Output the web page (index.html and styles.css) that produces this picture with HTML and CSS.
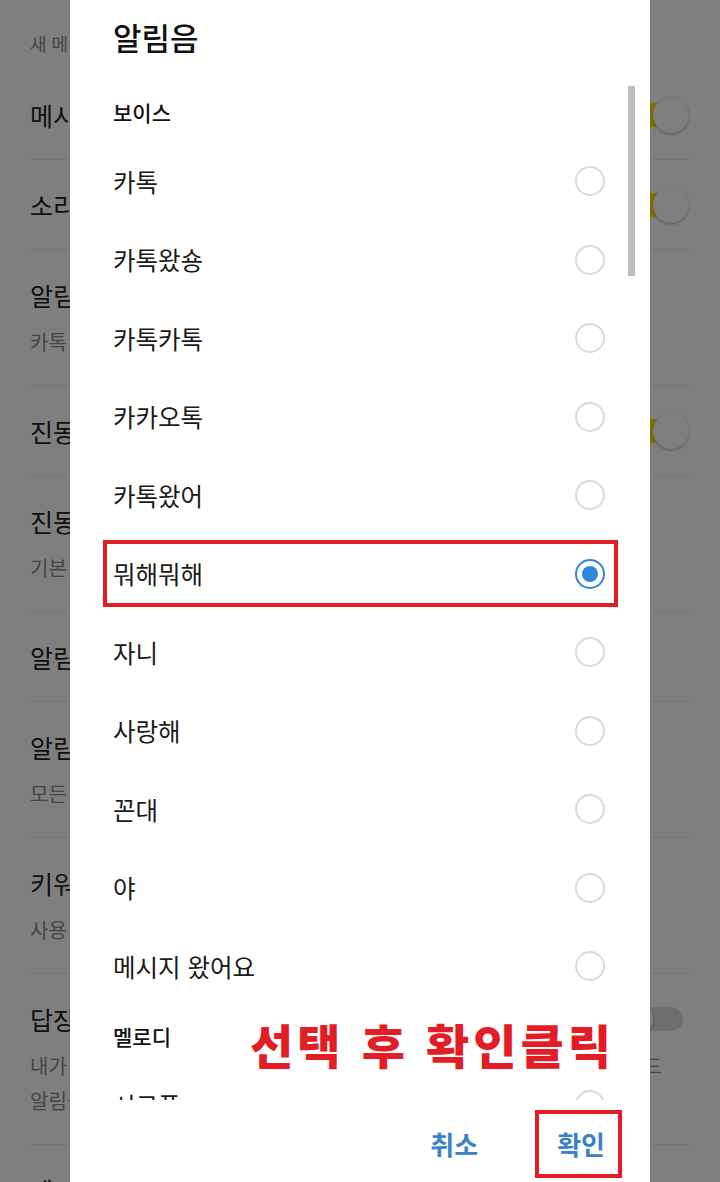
FILE: index.html
```html
<!DOCTYPE html>
<html lang="ko">
<head>
    <meta charset="UTF-8">
    <meta name="viewport" content="width=device-width, initial-scale=1.0">
    <title>알림음</title>
    <link rel="stylesheet" href="styles.css">
</head>
<body>
    <div class="settings">
        <div class="section-title">새 메시지 알림</div>

        <div class="row">
            <div class="row-text"><div class="row-title">메시지 알림</div></div>
            <div class="toggle on"></div>
        </div>
        <div class="row">
            <div class="row-text"><div class="row-title">소리</div></div>
            <div class="toggle on"></div>
        </div>
        <div class="row has-sub">
            <div class="row-text">
                <div class="row-title">알림음</div>
                <div class="row-sub">카톡</div>
            </div>
        </div>
        <div class="row">
            <div class="row-text"><div class="row-title">진동</div></div>
            <div class="toggle on"></div>
        </div>
        <div class="row has-sub">
            <div class="row-text">
                <div class="row-title">진동 패턴</div>
                <div class="row-sub">기본 진동</div>
            </div>
        </div>
        <div class="row">
            <div class="row-text"><div class="row-title">알림창 설정</div></div>
        </div>
        <div class="row has-sub">
            <div class="row-text">
                <div class="row-title">알림 메시지 표시</div>
                <div class="row-sub">모든 내용 표시</div>
            </div>
        </div>
        <div class="row has-sub">
            <div class="row-text">
                <div class="row-title">키워드 알림</div>
                <div class="row-sub">사용 안 함</div>
            </div>
        </div>
        <div class="row has-sub">
            <div class="row-text">
                <div class="row-title">답장 알림</div>
                <div class="row-sub">내가 보낸 메시지에 답장이 오면 채팅방 알림이 꺼져 있어도 알림을 받는 모드<br>알림을 받을 수 있습니다</div>
            </div>
            <div class="toggle"></div>
        </div>
        <div class="row">
            <div class="row-text"><div class="row-title">메시지 미리보기</div></div>
        </div>
    </div>

    <div class="dim"></div>

    <div class="dialog">
        <div class="dialog-title">알림음</div>

        <div class="sound-list">
            <div class="list-header">보이스</div>
            <div class="sound-item"><span>카톡</span><span class="radio"></span></div>
            <div class="sound-item"><span>카톡왔숑</span><span class="radio"></span></div>
            <div class="sound-item"><span>카톡카톡</span><span class="radio"></span></div>
            <div class="sound-item"><span>카카오톡</span><span class="radio"></span></div>
            <div class="sound-item"><span>카톡왔어</span><span class="radio"></span></div>
            <div class="sound-item"><span>뭐해뭐해</span><span class="radio checked"></span></div>
            <div class="sound-item"><span>자니</span><span class="radio"></span></div>
            <div class="sound-item"><span>사랑해</span><span class="radio"></span></div>
            <div class="sound-item"><span>꼰대</span><span class="radio"></span></div>
            <div class="sound-item"><span>야</span><span class="radio"></span></div>
            <div class="sound-item"><span>메시지 왔어요</span><span class="radio"></span></div>
            <div class="list-header">멜로디</div>
            <div class="sound-item"><span>시크푸</span><span class="radio"></span></div>
            <div class="sound-item"><span>카톡 멜로디</span><span class="radio"></span></div>

            <div class="scrollbar"></div>
        </div>

        <div class="dialog-actions">
            <button class="action-btn">취소</button>
            <button class="action-btn">확인</button>
        </div>
    </div>

    <!-- 안내용 빨간 표시 -->
    <div class="mark mark-item"></div>
    <div class="mark mark-ok"></div>
    <div class="mark-note">선택 후 확인클릭</div>
</body>
</html>
```

FILE: styles.css
```css
body {
    margin: 0;
    height: 1182px;
    overflow: hidden;
    background-color: #fff;
    font-family: "Noto Sans CJK KR", "Noto Sans", sans-serif;
}

/* 뒤에 깔린 설정 화면 */
.settings {
    color: #222;
}

.section-title {
    height: 70px;
    box-sizing: border-box;
    padding: 30px 0 0 30px;
    font-size: 18px;
    line-height: 26px;
    color: #888;
}

.row {
    display: flex;
    align-items: center;
    margin: 0 30px;
    padding: 28px 7px 27px 0;
    border-bottom: 1px solid #ececec;
}

.row.has-sub {
    align-items: flex-start;
    padding-bottom: 26px;
}

.row-text {
    flex: 1;
    min-width: 0;
}

.row-title {
    font-size: 25px;
    line-height: 34px;
    color: #222;
    white-space: nowrap;
}

.row-sub {
    margin-top: 12px;
    font-size: 20px;
    line-height: 35px;
    color: #8a8a8a;
    white-space: nowrap;
}

.toggle {
    position: relative;
    flex: none;
    width: 60px;
    height: 36px;
    margin: -1px 0;
}

.toggle::before {
    content: "";
    position: absolute;
    left: 0;
    right: 0;
    top: 6px;
    height: 24px;
    border-radius: 12px;
    background-color: #dcdcdc;
}

.toggle::after {
    content: "";
    position: absolute;
    top: 0;
    left: -6px;
    width: 36px;
    height: 36px;
    border-radius: 50%;
    background-color: #fff;
    box-shadow: 0 1px 3px rgba(0, 0, 0, 0.3);
}

.toggle.on::before {
    background-color: #ffe100;
}

.toggle.on::after {
    left: auto;
    right: -6px;
}

.dim {
    position: fixed;
    top: 0;
    left: 0;
    right: 0;
    bottom: 0;
    background-color: rgba(0, 0, 0, 0.5);
}

/* 알림음 선택 다이얼로그 */
.dialog {
    position: fixed;
    top: 0;
    left: 70px;
    width: 580px;
    height: 1182px;
    display: flex;
    flex-direction: column;
    background-color: #fff;
}

.dialog-title {
    flex: none;
    height: 82px;
    box-sizing: border-box;
    padding: 15px 0 0 43px;
    font-size: 31px;
    line-height: 44px;
    font-weight: 500;
    color: #111;
}

.sound-list {
    position: relative;
    flex: none;
    height: 1018px;
    overflow: hidden;
}

.list-header {
    display: flex;
    align-items: center;
    height: 60px;
    padding-left: 43px;
    font-size: 21px;
    font-weight: 500;
    color: #111;
}

.sound-item {
    display: flex;
    align-items: center;
    justify-content: space-between;
    height: 78.5px;
    padding: 0 45px 0 43px;
    font-size: 24.5px;
    color: #1a1a1a;
}

.radio {
    width: 30px;
    height: 30px;
    box-sizing: border-box;
    border: 2.5px solid #dadada;
    border-radius: 50%;
    display: flex;
    justify-content: center;
    align-items: center;
}

.radio.checked {
    border-color: #2f86dd;
}

.radio.checked::after {
    content: "";
    width: 16px;
    height: 16px;
    border-radius: 50%;
    background-color: #2f86dd;
}

.scrollbar {
    position: absolute;
    top: 4px;
    right: 15px;
    width: 7px;
    height: 190px;
    background-color: #bdbdbd;
}

.dialog-actions {
    flex: 1;
    display: flex;
    justify-content: flex-end;
    align-items: center;
    gap: 79px;
    padding: 4px 45px 0 0;
}

.action-btn {
    padding: 0;
    border: none;
    background: none;
    font-family: "Noto Sans CJK KR", sans-serif;
    font-size: 26px;
    font-weight: bold;
    color: #3a82c4;
}

/* 빨간 안내 표시 */
.mark {
    position: fixed;
    border: 4px solid #e31d25;
}

.mark-item {
    left: 103px;
    top: 540px;
    width: 507px;
    height: 59px;
}

.mark-ok {
    left: 535px;
    top: 1110px;
    width: 79px;
    height: 60px;
}

.mark-note {
    position: fixed;
    left: 250px;
    top: 1020px;
    font-size: 47px;
    line-height: 47px;
    font-weight: 900;
    letter-spacing: 4px;
    color: #e31d25;
    white-space: nowrap;
}
```
